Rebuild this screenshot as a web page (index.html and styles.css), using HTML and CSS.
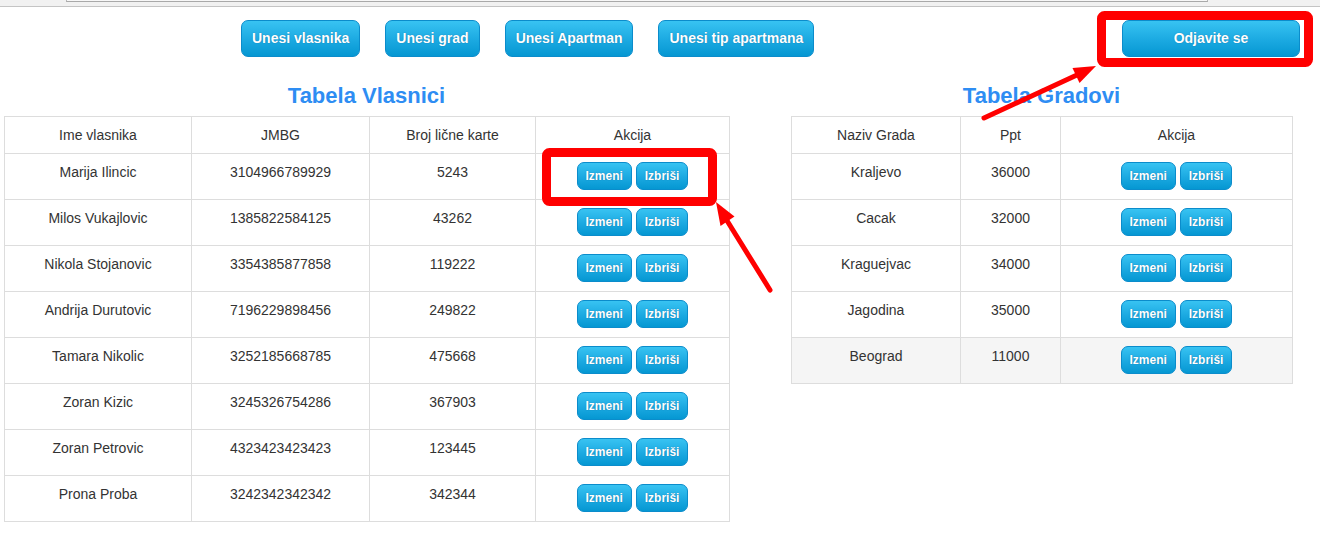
FILE: index.html
```html
<!DOCTYPE html>
<html>
<head>
<meta charset="utf-8">
<title>Tabele</title>
<link rel="stylesheet" href="styles.css">
</head>
<body>
<div class="topbar"><div class="addr"></div></div>
<header class="header">
  <nav class="nav">
    <button class="btn btn-lg">Unesi vlasnika</button>
    <button class="btn btn-lg">Unesi grad</button>
    <button class="btn btn-lg">Unesi Apartman</button>
    <button class="btn btn-lg">Unesi tip apartmana</button>
  </nav>
  <button class="btn btn-lg logout">Odjavite se</button>
</header>
<main class="main">
  <section class="section left">
    <h2 class="title">Tabela Vlasnici</h2>
    <table class="tbl">
      <colgroup><col class="c187"><col class="c178"><col class="c166"><col class="c194"></colgroup>
      <thead><tr><th>Ime vlasnika</th><th>JMBG</th><th>Broj lične karte</th><th>Akcija</th></tr></thead>
      <tbody>
        <tr><td>Marija Ilincic</td><td>3104966789929</td><td>5243</td><td class="act"><button class="btn btn-sm">Izmeni</button> <button class="btn btn-sm">Izbriši</button></td></tr>
        <tr><td>Milos Vukajlovic</td><td>1385822584125</td><td>43262</td><td class="act"><button class="btn btn-sm">Izmeni</button> <button class="btn btn-sm">Izbriši</button></td></tr>
        <tr><td>Nikola Stojanovic</td><td>3354385877858</td><td>119222</td><td class="act"><button class="btn btn-sm">Izmeni</button> <button class="btn btn-sm">Izbriši</button></td></tr>
        <tr><td>Andrija Durutovic</td><td>7196229898456</td><td>249822</td><td class="act"><button class="btn btn-sm">Izmeni</button> <button class="btn btn-sm">Izbriši</button></td></tr>
        <tr><td>Tamara Nikolic</td><td>3252185668785</td><td>475668</td><td class="act"><button class="btn btn-sm">Izmeni</button> <button class="btn btn-sm">Izbriši</button></td></tr>
        <tr><td>Zoran Kizic</td><td>3245326754286</td><td>367903</td><td class="act"><button class="btn btn-sm">Izmeni</button> <button class="btn btn-sm">Izbriši</button></td></tr>
        <tr><td>Zoran Petrovic</td><td>4323423423423</td><td>123445</td><td class="act"><button class="btn btn-sm">Izmeni</button> <button class="btn btn-sm">Izbriši</button></td></tr>
        <tr><td>Prona Proba</td><td>3242342342342</td><td>342344</td><td class="act"><button class="btn btn-sm">Izmeni</button> <button class="btn btn-sm">Izbriši</button></td></tr>
      </tbody>
    </table>
  </section>
  <section class="section right">
    <h2 class="title">Tabela Gradovi</h2>
    <table class="tbl">
      <colgroup><col class="c169"><col class="c100"><col class="c232"></colgroup>
      <thead><tr><th>Naziv Grada</th><th>Ppt</th><th>Akcija</th></tr></thead>
      <tbody>
        <tr><td>Kraljevo</td><td>36000</td><td class="act"><button class="btn btn-sm">Izmeni</button> <button class="btn btn-sm">Izbriši</button></td></tr>
        <tr><td>Cacak</td><td>32000</td><td class="act"><button class="btn btn-sm">Izmeni</button> <button class="btn btn-sm">Izbriši</button></td></tr>
        <tr><td>Kraguejvac</td><td>34000</td><td class="act"><button class="btn btn-sm">Izmeni</button> <button class="btn btn-sm">Izbriši</button></td></tr>
        <tr><td>Jagodina</td><td>35000</td><td class="act"><button class="btn btn-sm">Izmeni</button> <button class="btn btn-sm">Izbriši</button></td></tr>
        <tr class="hover"><td>Beograd</td><td>11000</td><td class="act"><button class="btn btn-sm">Izmeni</button> <button class="btn btn-sm">Izbriši</button></td></tr>
      </tbody>
    </table>
  </section>
</main>
<svg class="annot" width="1320" height="547" viewBox="0 0 1320 547" xmlns="http://www.w3.org/2000/svg">
  <rect x="546.5" y="152.5" width="166" height="49" rx="3" fill="none" stroke="#ff0000" stroke-width="9"/>
  <rect x="1101.5" y="15.5" width="207" height="47" rx="3" fill="none" stroke="#ff0000" stroke-width="9"/>
  <line x1="770" y1="290" x2="726" y2="219" stroke="#ff0000" stroke-width="5" stroke-linecap="round"/>
  <polygon points="716,202 720.5,226 734.5,216.5" fill="#ff0000"/>
  <line x1="984" y1="118" x2="1078" y2="74.5" stroke="#ff0000" stroke-width="5" stroke-linecap="round"/>
  <polygon points="1096,66 1079.5,83 1072.5,68" fill="#ff0000"/>
</svg>
</body>
</html>
```

FILE: styles.css
```css
html, body {
  margin: 0;
  padding: 0;
  background: #ffffff;
}
body {
  position: relative;
  width: 1320px;
  height: 547px;
  overflow: hidden;
  font-family: "Liberation Sans", Arial, sans-serif;
  font-size: 14px;
  color: #333333;
}
.topbar {
  height: 6px;
  background: #f1f1f1;
  border-bottom: 1px solid #c4c4c4;
  padding-left: 66px;
}
.addr {
  width: 1140px;
  height: 1px;
  border-left: 1px solid #b5b5b5;
  border-right: 1px solid #b5b5b5;
  border-bottom: 1px solid #a9a9a9;
  background: #f7f7f7;
}
.header {
  display: flex;
  align-items: flex-start;
  padding: 13px 20px 0 241px;
}
.nav {
  display: flex;
  gap: 25px;
}
.btn {
  font-family: "Liberation Sans", Arial, sans-serif;
  font-weight: bold;
  color: #ffffff;
  text-shadow: 0 0 1px rgba(0, 60, 110, 0.55);
  background: linear-gradient(to bottom, #38c3f2 0%, #1ba9e1 55%, #0597d2 100%);
  border: 1px solid #0b8ccb;
  cursor: pointer;
  margin: 0;
}
.btn-lg {
  height: 37px;
  padding: 0 10px;
  font-size: 14px;
  line-height: 35px;
  border-radius: 7px;
}
.logout {
  margin-left: auto;
  width: 178px;
}
.main {
  display: flex;
  align-items: flex-start;
  padding-left: 4px;
}
.section.left {
  width: 725px;
}
.section.right {
  width: 501px;
  margin-left: 62px;
}
.title {
  margin: 26px 0 8px;
  font-size: 22px;
  line-height: 25px;
  font-weight: bold;
  text-align: center;
  color: #2e8df3;
}
.tbl {
  width: 100%;
  border-collapse: collapse;
  table-layout: fixed;
  border: 1px solid #dddddd;
}
.c187 { width: 187px; }
.c178 { width: 178px; }
.c166 { width: 166px; }
.c194 { width: 194px; }
.c169 { width: 169px; }
.c100 { width: 100px; }
.c232 { width: 232px; }
.tbl th,
.tbl td {
  border: 1px solid #dddddd;
  padding: 8px;
  text-align: center;
  vertical-align: top;
  line-height: 20px;
  font-weight: normal;
  white-space: nowrap;
}
.tbl th {
  height: 20px;
}
.tbl td {
  height: 29px;
}
.tbl tr.hover td {
  background: #f5f5f5;
}
.tbl td.act {
  font-size: 14px;
}
.btn-sm {
  height: 28px;
  padding: 0 8px;
  font-size: 12px;
  line-height: 26px;
  border-radius: 7px;
  vertical-align: top;
}
.annot {
  position: absolute;
  left: 0;
  top: 0;
  pointer-events: none;
}
```
